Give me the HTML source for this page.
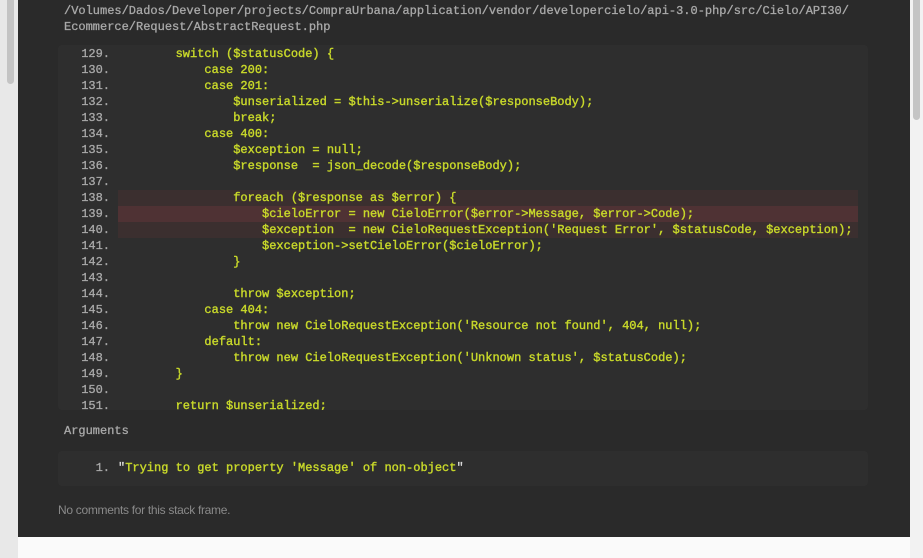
<html><head><style>
body{margin:0;width:923px;height:558px;background:#fafafa;position:relative;overflow:hidden;font-family:"Liberation Mono",monospace;font-size:12px}
.ls{position:absolute;left:0;top:0;width:18px;height:558px;background:#e8e8e8}
.lt{position:absolute;left:7px;top:0;width:7px;height:84px;background:#c4c4c4;border-radius:0 0 4px 4px}
.rs{position:absolute;right:0;top:0;width:13px;height:558px;background:#f2f2f2}
.rt{position:absolute;left:913px;top:0;width:7px;height:120px;background:#c4c4c4;border-radius:0 0 4px 4px}
.panel{position:absolute;left:18px;top:0;width:892px;height:537px;background:#2a2a2a}
.path{position:absolute;left:64px;top:3px;color:#a9a9a9;line-height:16px;white-space:pre;-webkit-text-stroke:0.3px #a9a9a9}
.code{position:absolute;left:58px;top:45px;width:810px;height:365px;background:#2e2e2e;border-radius:4px;overflow:hidden}
.ln{position:absolute;left:0;width:52px;text-align:right;color:#a9a9a9;-webkit-text-stroke:0.3px #a9a9a9}
.l{position:absolute;left:0;width:810px;height:16px;line-height:16px;white-space:pre}
.c{position:absolute;left:60px;color:#c8d82a;-webkit-text-stroke:0.4px #c8d82a}
.h1{background:#3b2f2f;left:60px;width:740px}
.h2{background:#4f3234;left:60px;width:740px}
.args{position:absolute;left:64px;top:424px;color:#a9a9a9;-webkit-text-stroke:0.3px #a9a9a9}
.ab{position:absolute;left:58px;top:451px;width:810px;height:35px;background:#2e2e2e;border-radius:4px}
.nc{position:absolute;left:58px;top:503px;color:#8a8a8a;font-family:"Liberation Sans",sans-serif;font-size:12px;letter-spacing:-0.3px}
</style></head><body>
<div class="ls"><div class="lt"></div></div>
<div class="rs"></div><div class="rt"></div>
<div class="panel"></div>
<div class="path">/Volumes/Dados/Developer/projects/CompraUrbana/application/vendor/developercielo/api-3.0-php/src/Cielo/API30/
Ecommerce/Request/AbstractRequest.php</div>
<div class="code">
<div class="l h1" style="top:145px"></div>
<div class="l h2" style="top:161px"></div>
<div class="l h1" style="top:177px"></div>
<div class="l" style="top:1px"><span class="ln">129.</span><span class="c">        switch ($statusCode) {</span></div>
<div class="l" style="top:17px"><span class="ln">130.</span><span class="c">            case 200:</span></div>
<div class="l" style="top:33px"><span class="ln">131.</span><span class="c">            case 201:</span></div>
<div class="l" style="top:49px"><span class="ln">132.</span><span class="c">                $unserialized = $this->unserialize($responseBody);</span></div>
<div class="l" style="top:65px"><span class="ln">133.</span><span class="c">                break;</span></div>
<div class="l" style="top:81px"><span class="ln">134.</span><span class="c">            case 400:</span></div>
<div class="l" style="top:97px"><span class="ln">135.</span><span class="c">                $exception = null;</span></div>
<div class="l" style="top:113px"><span class="ln">136.</span><span class="c">                $response  = json_decode($responseBody);</span></div>
<div class="l" style="top:129px"><span class="ln">137.</span></div>
<div class="l" style="top:145px"><span class="ln">138.</span><span class="c">                foreach ($response as $error) {</span></div>
<div class="l" style="top:161px"><span class="ln">139.</span><span class="c">                    $cieloError = new CieloError($error->Message, $error->Code);</span></div>
<div class="l" style="top:177px"><span class="ln">140.</span><span class="c">                    $exception  = new CieloRequestException('Request Error', $statusCode, $exception);</span></div>
<div class="l" style="top:193px"><span class="ln">141.</span><span class="c">                    $exception->setCieloError($cieloError);</span></div>
<div class="l" style="top:209px"><span class="ln">142.</span><span class="c">                }</span></div>
<div class="l" style="top:225px"><span class="ln">143.</span></div>
<div class="l" style="top:241px"><span class="ln">144.</span><span class="c">                throw $exception;</span></div>
<div class="l" style="top:257px"><span class="ln">145.</span><span class="c">            case 404:</span></div>
<div class="l" style="top:273px"><span class="ln">146.</span><span class="c">                throw new CieloRequestException('Resource not found', 404, null);</span></div>
<div class="l" style="top:289px"><span class="ln">147.</span><span class="c">            default:</span></div>
<div class="l" style="top:305px"><span class="ln">148.</span><span class="c">                throw new CieloRequestException('Unknown status', $statusCode);</span></div>
<div class="l" style="top:321px"><span class="ln">149.</span><span class="c">        }</span></div>
<div class="l" style="top:337px"><span class="ln">150.</span></div>
<div class="l" style="top:353px"><span class="ln">151.</span><span class="c">        return $unserialized;</span></div>
</div>
<div class="args">Arguments</div>
<div class="ab"><div class="l" style="top:9px"><span class="ln">1.</span><span class="c"><span style="color:#ddd;-webkit-text-stroke:0.3px #ddd">"</span>Trying to get property 'Message' of non-object<span style="color:#ddd;-webkit-text-stroke:0.3px #ddd">"</span></span></div></div>
<div class="nc">No comments for this stack frame.</div>
</body></html>
